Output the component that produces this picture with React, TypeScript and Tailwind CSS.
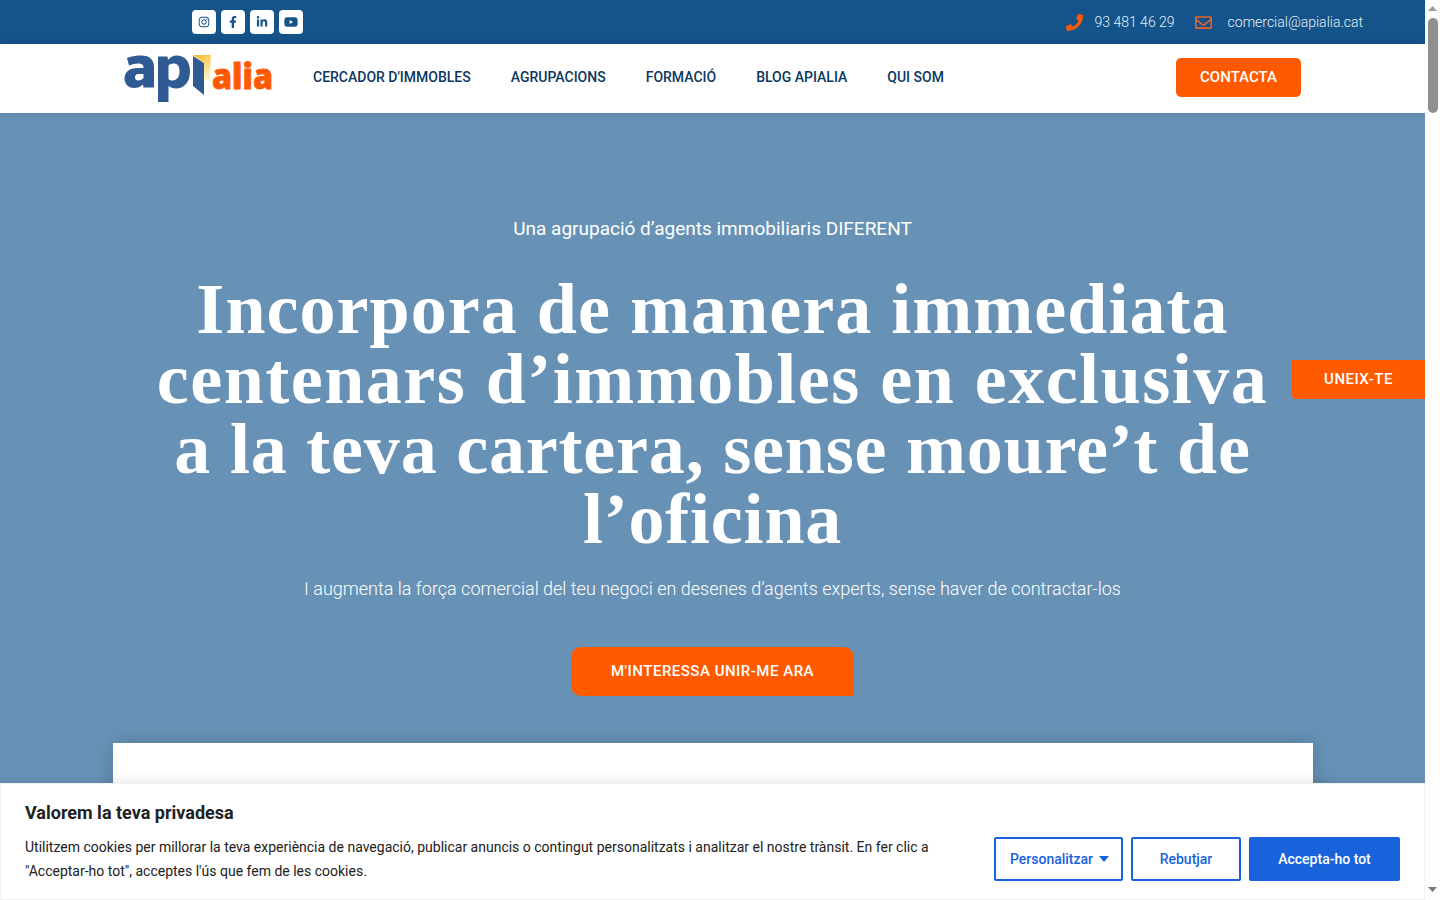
import React from "react";
import { FaInstagram, FaFacebookF, FaLinkedinIn, FaYoutube, FaPhone, FaRegEnvelope } from "react-icons/fa";

const Logo = () => (
  <svg width="160" height="56" viewBox="0 0 160 56" className="block shrink-0">
    <defs>
      <linearGradient id="g" x1="0" y1="0" x2="0.4" y2="1">
        <stop offset="0" stopColor="#f6b52a" />
        <stop offset="1" stopColor="#fdf3c0" />
      </linearGradient>
    </defs>
    <path fill="#2f5a94" fillRule="evenodd" d="M3 8 C8 6 13 5.500 17 5.500 C26 5.500 30 10 30 17 V37.500 H19.500 L19 34.500 C16.500 37 13 38 10 38 C4 38 0.500 33.500 0.500 28.500 C0.500 22 6 18 13 18 H19.500 V17 C19.500 14.500 17 13.500 14 13.500 C11 13.500 8 14.300 5 15.500 Z M19.500 24 H14.500 C12 24 11 25.500 11 27.500 C11 29.500 12.500 30.500 14 30.500 C16.500 30.500 18.500 29.500 19.500 28 Z" />
    <path fill="#2f5a94" fillRule="evenodd" d="M34 6.500 H43.500 L44 10 C46.500 7 49 5.500 52.500 5.500 C61.500 5.500 66 12 66 21.500 C66 31.500 60.500 38.500 52 38.500 C49 38.500 46.500 37.500 44.500 36 V52 H34 Z M44.500 15.500 V29 C45.500 30 47 30.500 48.500 30.500 C53 30.500 55.500 27 55.500 21.500 C55.500 16 53.500 13.500 49.500 13.500 C47.500 13.500 45.500 14.300 44.500 15.500 Z" />
    <path fill="#2f5a94" d="M69 6 L80 13 V45 L69 36 Z" />
    <path fill="url(#g)" d="M69 5 H87 L86 30 H80 V13 Z" />
    <text x="88" y="39" fontFamily="Open Sans, sans-serif" fontWeight="800" fontSize="36" fill="#ff5a00" stroke="#ff5a00" strokeWidth="0.8" textLength="61" lengthAdjust="spacingAndGlyphs">alia</text>
  </svg>
);

const Social = ({ children }: { children: React.ReactNode }) => (
  <span className="flex h-6 w-6 items-center justify-center rounded-[4px] bg-white text-[12px] text-[#14548a]">{children}</span>
);

const NavItem = ({ children }: { children: React.ReactNode }) => (
  <a className="text-[14px] font-medium text-[#0c3760]">{children}</a>
);

export default function App() {
  return (
    <div className="relative flex h-[900px] w-[1440px] overflow-hidden bg-white font-['Roboto',sans-serif]">
      <div className="relative w-[1425px] shrink-0 overflow-hidden">
        <header className="flex h-[44px] items-center justify-between bg-[#14548a] pl-[192px] pr-[62px]">
          <div className="flex gap-[5px]">
            <Social><FaInstagram /></Social>
            <Social><FaFacebookF /></Social>
            <Social><FaLinkedinIn /></Social>
            <Social><FaYoutube className="text-[14px]" /></Social>
          </div>
          <div className="flex items-center text-[14px] font-light text-[#e6eef5]">
            <FaPhone className="mr-[11px] text-[17px] text-[#ff5a00]" />
            <span>93 481 46 29</span>
            <FaRegEnvelope className="ml-[20px] mr-[16px] text-[17px] text-[#e9622a]" />
            <span>comercial@apialia.cat</span>
          </div>
        </header>
        <nav className="relative z-10 flex h-[69px] items-center bg-white pb-[2px] pl-[124px] pr-[124px] shadow-[0_0_10px_rgba(0,0,0,0.15)]">
          <Logo />
          <div className="ml-[29px] flex gap-[40px]">
            <NavItem>CERCADOR D'IMMOBLES</NavItem>
            <NavItem>AGRUPACIONS</NavItem>
            <NavItem>FORMACIÓ</NavItem>
            <NavItem>BLOG APIALIA</NavItem>
            <NavItem>QUI SOM</NavItem>
          </div>
          <a className="ml-auto flex h-[39px] w-[125px] items-center justify-center rounded-[5px] bg-[#ff5a00] text-[15px] font-medium text-white">CONTACTA</a>
        </nav>
        <main className="flex h-[787px] flex-col items-center bg-[#6792b6] text-center text-white">
          <p className="mt-[103px] shrink-0 text-[19px] leading-[26px]">Una agrupació d’agents immobiliaris DIFERENT</p>
          <h1 className="mt-[32px] w-[1200px] shrink-0 font-['Liberation_Serif',serif] text-[72px] font-bold leading-[70px]">
            <span className="block tracking-[1.05px]">Incorpora de manera immediata</span>
            <span className="block tracking-[1.5px]">centenars d’immobles en exclusiva</span>
            <span className="block tracking-[0.8px]">a la teva cartera, sense moure’t de</span>
            <span className="block tracking-[0.8px]">l’oficina</span>
          </h1>
          <p className="mt-[23px] shrink-0 text-[18px] font-light leading-[24px]">I augmenta la força comercial del teu negoci en desenes d’agents experts, sense haver de contractar-los</p>
          <a className="mt-[46px] flex h-[49px] w-[283px] shrink-0 items-center justify-center rounded-[10px_10px_0_10px] bg-[#ff5a00] text-[15px] font-medium tracking-[0.5px] text-white">M'INTERESSA UNIR-ME ARA</a>
          <div className="mt-[47px] h-[200px] w-[1200px] shrink-0 bg-white shadow-[0_0_18px_rgba(0,0,0,0.18)]" />
        </main>
        <a className="absolute right-0 top-[360px] flex h-[39px] w-[133px] items-center justify-center rounded-bl-[4px] bg-[#ff5a00] text-[15px] font-medium tracking-[0.5px] text-white">UNEIX-TE</a>
        <section className="absolute bottom-0 left-0 right-0 h-[117px] border border-[#f2f2f2] bg-white pl-[24px] pr-[24px] shadow-[0_-2px_10px_rgba(0,0,0,0.1)]">
          <h2 className="mt-[17px] text-[18px] font-bold leading-[24px] text-[#212121]">Valorem la teva privadesa</h2>
          <div className="flex items-start justify-between">
            <p className="mt-[10px] w-[930px] text-[14px] leading-[24px] text-[#212121]">
              Utilitzem cookies per millorar la teva experiència de navegació, publicar anuncis o contingut personalitzats i analitzar el nostre trànsit. En fer clic a "Acceptar-ho tot", acceptes l'ús que fem de les cookies.
            </p>
            <div className="mt-[12px] flex gap-[8px] text-[14px] font-medium">
              <button className="flex h-[44px] w-[129px] items-center justify-center gap-[6px] rounded-[2px] border-2 border-[#1863dc] pl-[2px] text-[#1863dc]">
                Personalitzar
                <svg width="10" height="6" viewBox="0 0 10 6"><path d="M0 0h10L5 6z" fill="#1863dc" /></svg>
              </button>
              <button className="h-[44px] w-[110px] rounded-[2px] border-2 border-[#1863dc] text-[#1863dc]">Rebutjar</button>
              <button className="h-[44px] w-[151px] rounded-[2px] bg-[#1863dc] text-white">Accepta-ho tot</button>
            </div>
          </div>
        </section>
      </div>
      <div className="relative flex w-[15px] shrink-0 flex-col items-center bg-[#fdfdfd]">
        <svg width="9" height="5" viewBox="0 0 9 5" className="mt-[6px]"><path d="M4.500 0L9 5H0z" fill="#9a9a9a" /></svg>
        <div className="mt-[7px] h-[95px] w-[10px] rounded-[5px] bg-[#8f8f8f]" />
        <svg width="9" height="5" viewBox="0 0 9 5" className="mb-[8px] mt-auto"><path d="M0 0h9L4.500 5z" fill="#7a7a7a" /></svg>
      </div>
    </div>
  );
}
